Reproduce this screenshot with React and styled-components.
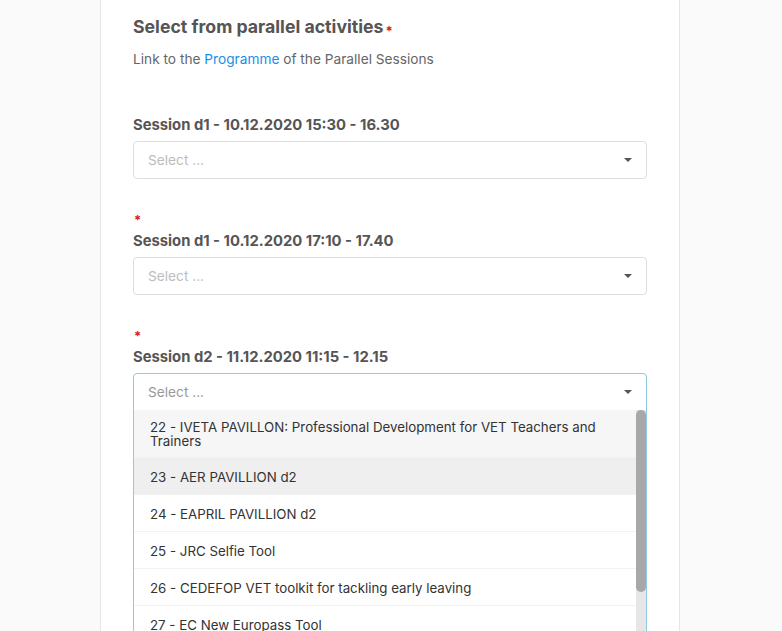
import React from "react";
import styled, { createGlobalStyle } from "styled-components";

const sessions = [
  { label: "Session d1 - 10.12.2020 15:30 - 16.30", required: false, open: false },
  { label: "Session d1 - 10.12.2020 17:10 - 17.40", required: true, open: false },
  { label: "Session d2 - 11.12.2020 11:15 - 12.15", required: true, open: true },
];

const options = [
  "22 - IVETA PAVILLON: Professional Development for VET Teachers and Trainers",
  "23 - AER PAVILLION d2",
  "24 - EAPRIL PAVILLION d2",
  "25 - JRC Selfie Tool",
  "26 - CEDEFOP VET toolkit for tackling early leaving",
  "27 - EC New Europass Tool",
  "28 - ETF PAVILLION d2",
  "29 - EfVET PAVILLION d2",
  "30 - EVTA PAVILLION d2",
  "31 - EUproVET PAVILLION d2",
  "32 - OBESSU PAVILLION d2",
  "33 - EURASHE PAVILLION d2",
  "34 - EAfA PAVILLION d2",
];

const App = () => {
  return (
    <>
      <GlobalStyle />
      <Card>
        <Title>
          Select from parallel activities<TitleStar>*</TitleStar>
        </Title>
        <Intro>
          Link to the <Link href="#programme">Programme</Link> of the Parallel Sessions
        </Intro>
        <Fields>
          {sessions.map((s) => (
            <Field key={s.label}>
              {s.required && <Star>*</Star>}
              <Label>{s.label}</Label>
              <SelectBox $open={s.open}>
                <Placeholder $open={s.open}>Select ...</Placeholder>
                <Caret />
                {s.open && (
                  <Menu>
                    <OptionList>
                      {options.map((o, i) => (
                        <Option key={o} $tone={i === 0 ? "focus" : i === 1 ? "hover" : "none"}>
                          {o}
                        </Option>
                      ))}
                    </OptionList>
                    <ScrollTrack>
                      <ScrollThumb />
                    </ScrollTrack>
                  </Menu>
                )}
              </SelectBox>
            </Field>
          ))}
        </Fields>
      </Card>
    </>
  );
};

export default App;

const GlobalStyle = createGlobalStyle`
  html, body {
    margin: 0;
    overflow: hidden;
    background: #fafafa;
    font-family: Inter, "Noto Sans", sans-serif;
  }
  body {
    padding: 0 2px 0 0;
  }
  * { box-sizing: border-box; }
`;

const Card = styled.div`
  width: 580px;
  min-height: 760px;
  margin: 0 auto;
  padding: 15px 32px 0 32px;
  background: #fff;
  border-left: 1px solid #e6e6e6;
  border-right: 1px solid #e6e6e6;
`;

const Title = styled.h2`
  margin: 0;
  font-size: 17.7px;
  line-height: 24px;
  font-weight: 700;
  color: #555;
`;

const TitleStar = styled.span`
  position: relative;
  top: 3px;
  margin-left: 2px;
  font-size: 13px;
  color: #e5161b;
`;

const Intro = styled.p`
  margin: 9px 0 0;
  font-size: 13.7px;
  line-height: 20px;
  color: #666;
`;

const Link = styled.a`
  color: #1a8fe8;
  text-decoration: none;
`;

const Fields = styled.div`
  display: flex;
  flex-direction: column;
  gap: 32px;
  margin-top: 46px;
`;

const Field = styled.div`
  display: flex;
  flex-direction: column;
`;

const Star = styled.span`
  font-size: 13px;
  line-height: 19px;
  color: #e5161b;
  font-weight: 700;
  padding-left: 1px;
  margin-bottom: 1px;
`;

const Label = styled.label`
  font-size: 14.8px;
  line-height: 20px;
  font-weight: 700;
  color: #555;
  margin-bottom: 6px;
`;

const SelectBox = styled.div`
  position: relative;
  display: flex;
  align-items: center;
  justify-content: space-between;
  height: 38px;
  padding: 0 14px;
  border: 1px solid ${(p) => (p.$open ? "#8fcbe2" : "#dedede")};
  border-radius: ${(p) => (p.$open ? "4px 4px 0 0" : "4px")};
  background: #fff;
`;

const Placeholder = styled.span`
  font-size: 13.7px;
  color: ${(p) => (p.$open ? "#999" : "#bdbdbd")};
`;

const Caret = styled.span`
  width: 0;
  height: 0;
  border-left: 4px solid transparent;
  border-right: 4px solid transparent;
  border-top: 4px solid #555;
`;

const Menu = styled.div`
  position: absolute;
  top: 100%;
  left: -1px;
  right: -1px;
  height: 300px;
  display: flex;
  overflow: hidden;
  background: #fff;
  border: 1px solid #8fcbe2;
  border-top: none;
  z-index: 5;
`;

const OptionList = styled.div`
  flex: 1;
  display: flex;
  flex-direction: column;
`;

const Option = styled.div`
  flex-shrink: 0;
  display: flex;
  align-items: center;
  min-height: 37px;
  padding: 10px 16px 9px 16px;
  font-size: 13.3px;
  line-height: 14px;
  color: #333;
  border-bottom: 1px solid #f2f2f2;
  background: ${(p) =>
    p.$tone === "focus" ? "#f6f6f6" : p.$tone === "hover" ? "#efefef" : "#fff"};
`;

const ScrollTrack = styled.div`
  width: 10px;
  flex-shrink: 0;
  background: #e6e6e6;
`;

const ScrollThumb = styled.div`
  height: 182px;
  border-radius: 5px;
  background: #a8a8a8;
`;
